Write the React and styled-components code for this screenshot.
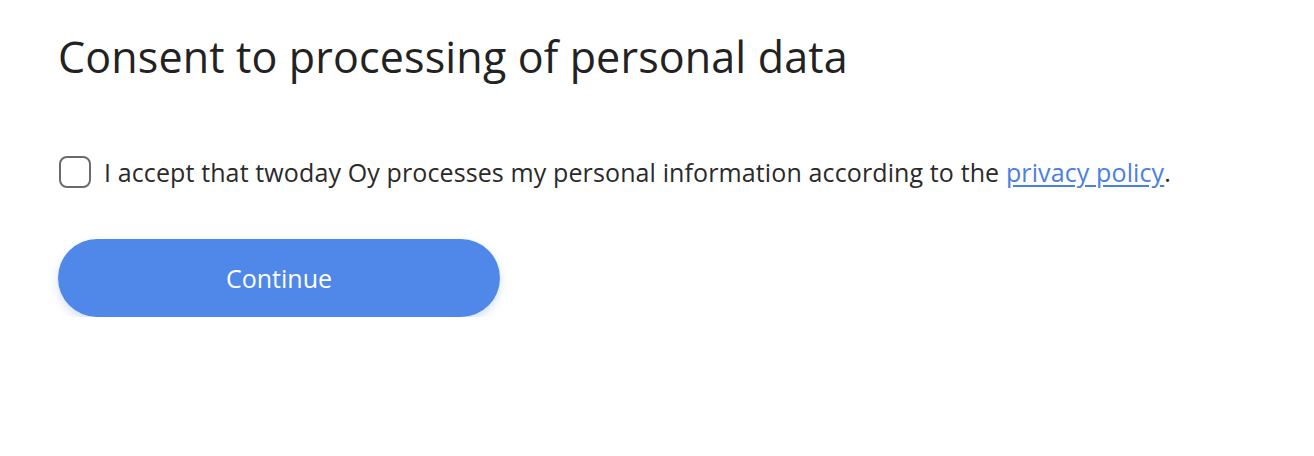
import React from "react";
import styled, { createGlobalStyle } from "styled-components";

const GlobalStyles = createGlobalStyle`
  body {
    margin: 0;
    background: #fff;
    font-family: "Open Sans", "Liberation Sans", sans-serif;
    color: #222;
  }
`;

function App() {
  const [checked, setChecked] = React.useState(false);
  return (
    <>
      <GlobalStyles />
      <Page>
        <Title>Consent to processing of personal data</Title>
        <ConsentRow>
          <Box type="checkbox" checked={checked} onChange={() => setChecked(!checked)} />
          <span>
            I accept that twoday Oy processes my personal information according to the{" "}
            <PolicyLink href="#">privacy policy</PolicyLink>.
          </span>
        </ConsentRow>
        <ContinueButton>Continue</ContinueButton>
      </Page>
    </>
  );
}

export default App;

const Page = styled.div`
  display: flex;
  flex-direction: column;
  align-items: flex-start;
  padding: 25px 0 0 58px;
`;

const Title = styled.h1`
  margin: 0;
  font-size: 43px;
  font-weight: 400;
  letter-spacing: 0.15px;
  line-height: 64px;
  color: #222;
`;

const ConsentRow = styled.label`
  display: flex;
  align-items: center;
  gap: 13px;
  margin-top: 65px;
  font-size: 25px;
  letter-spacing: 0.12px;
  line-height: 36px;
  color: #2a2a2a;
  cursor: pointer;
`;

const Box = styled.input`
  appearance: none;
  margin: 0 0 0 1px;
  width: 32px;
  height: 32px;
  border: 2px solid #6b6b6b;
  border-radius: 8px;
  background: #fff;
  flex-shrink: 0;
  cursor: pointer;
`;

const PolicyLink = styled.a`
  color: #4a80e0;
  text-decoration: underline;
  text-underline-offset: 3px;
`;

const ContinueButton = styled.button`
  margin-top: 49px;
  width: 442px;
  height: 78px;
  border: none;
  border-radius: 39px;
  background: #4f88e9;
  color: #fff;
  font-family: inherit;
  font-size: 25px;
  box-shadow: 0 4px 10px rgba(79, 136, 233, 0.25);
  cursor: pointer;
`;
